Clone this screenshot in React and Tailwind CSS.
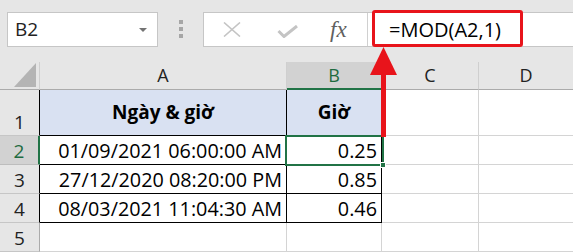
import React from "react";

const rows = [
  { n: "2", a: "01/09/2021 06:00:00 AM", b: "0.25" },
  { n: "3", a: "27/12/2020 08:20:00 PM", b: "0.85" },
  { n: "4", a: "08/03/2021 11:04:30 AM", b: "0.46" },
];

function ColHeader({ label, selected, last }) {
  return (
    <div
      className={`flex items-center justify-center text-[18px] border-b ${
        last ? "" : "border-r"
      } ${
        selected
          ? "bg-[#d2d2d2] text-[#1e6b40] border-b-2 border-b-[#217346] border-r-[#bdbdbd]"
          : "bg-[#e6e6e6] text-[#222] border-b-[#ababab] border-r-[#cfcfcf]"
      }`}
    >
      {label}
    </div>
  );
}

export default function App() {
  return (
    <div className="relative w-[573px] h-[252px] overflow-hidden bg-white font-['Open_Sans',sans-serif] text-black">
      {/* formula bar */}
      <div className="h-[62px] bg-[#e6e6e6] pt-[12px] flex items-start">
        <div className="ml-[7px] w-[151px] h-[35px] bg-white border border-[#c6c6c6] flex items-center justify-between pl-[7px] pr-[10px]">
          <span className="text-[19px] text-[#222] leading-none">B2</span>
          <span className="w-0 h-0 border-l-[4px] border-r-[4px] border-t-[4px] border-l-transparent border-r-transparent border-t-[#737373]" />
        </div>
        <div className="w-[45px] flex flex-col items-center gap-[3px] pt-[8px]">
          <span className="w-[4px] h-[4px] bg-[#a6a6a6]" />
          <span className="w-[4px] h-[4px] bg-[#a6a6a6]" />
          <span className="w-[4px] h-[4px] bg-[#a6a6a6]" />
        </div>
        <div className="flex-1 h-[35px] bg-white border border-r-0 border-[#c6c6c6] flex">
          <div className="w-[164px] h-full border-r border-[#d0d0d0] flex items-center">
            <svg className="ml-[19px]" width="18" height="15" viewBox="0 0 18 15">
              <path d="M1 0.5 L17 14.5 M17 0.5 L1 14.5" stroke="#c4c4c4" strokeWidth="1.6" fill="none" />
            </svg>
            <svg className="ml-[36px] mt-[3px]" width="21" height="13" viewBox="0 0 21 13">
              <path d="M1.5 6 L7 11.5 L20 1" stroke="#c4c4c4" strokeWidth="3" fill="none" />
            </svg>
            <span className="ml-[32px] font-['Liberation_Serif',serif] italic text-[23px] text-[#606060] leading-none">
              fx
            </span>
          </div>
          <div className="flex-1 flex items-center pl-[21px]">
            <span className="text-[20px] leading-none">=MOD(A2,1)</span>
          </div>
        </div>
      </div>

      {/* grid */}
      <div className="grid grid-cols-[40px_247px_95px_97px_94px] grid-rows-[28px_46px_29px_29px_29px_29px]">
        <div className="bg-[#e6e6e6] border-r border-b border-r-[#cfcfcf] border-b-[#ababab] flex items-end justify-end pr-[3px] pb-[2px]">
          <svg width="22" height="24" viewBox="0 0 22 24">
            <path d="M22 0 L22 24 L0 24 Z" fill="#b4b4b4" />
          </svg>
        </div>
        <ColHeader label="A" />
        <ColHeader label="B" selected />
        <ColHeader label="C" />
        <ColHeader label="D" last />

        {/* row 1 */}
        <div className="bg-[#e6e6e6] border-r border-b border-r-black border-b-[#c6c6c6] flex items-end justify-center pb-[3px] text-[19px] text-[#222] leading-[20px]">
          1
        </div>
        <div className="bg-[#d9e1f2] border-r border-b border-black flex items-center justify-center font-bold text-[19px]">
          Ngày &amp; giờ
        </div>
        <div className="bg-[#d9e1f2] border-r border-b border-black flex items-center justify-center font-bold text-[19px]">
          Giờ
        </div>
        <div className="border-r border-b border-[#d4d4d4]" />
        <div className="border-b border-[#d4d4d4]" />

        {rows.map((r) => (
          <React.Fragment key={r.n}>
            <div
              className={`border-b flex items-end justify-center pb-[3px] text-[19px] leading-[20px] ${
                r.n === "2"
                  ? "bg-[#d2d2d2] text-[#1e6b40] border-r-2 border-r-[#217346] border-b-[#bdbdbd]"
                  : "bg-[#e6e6e6] text-[#222] border-r border-r-black border-b-[#c6c6c6]"
              }`}
            >
              {r.n}
            </div>
            <div className="border-r border-b border-black flex items-end justify-end pr-[4px] pb-[3px] text-[19.8px] leading-[20px]">
              {r.a}
            </div>
            <div className="border-r border-b border-black flex items-end justify-end pr-[4px] pb-[3px] text-[19.8px] leading-[20px]">
              {r.b}
            </div>
            <div className="border-r border-b border-[#d4d4d4]" />
            <div className="border-b border-[#d4d4d4]" />
          </React.Fragment>
        ))}

        {/* row 5 */}
        <div className="bg-[#e6e6e6] border-r border-b border-r-[#ababab] border-b-[#c6c6c6] flex items-end justify-center pb-[3px] text-[19px] text-[#222] leading-[20px]">
          5
        </div>
        <div className="border-r border-b border-[#d4d4d4]" />
        <div className="border-r border-b border-[#d4d4d4]" />
        <div className="border-r border-b border-[#d4d4d4]" />
        <div className="border-b border-[#d4d4d4]" />
      </div>

      {/* selection B2 */}
      <div className="absolute left-[285px] top-[135px] w-[99px] h-[31px] border-2 border-[#217346]" />
      <div className="absolute left-[380px] top-[162px] w-[6px] h-[6px] bg-[#217346] border border-white" />

      {/* annotation */}
      <div className="absolute left-[372px] top-[10px] w-[151px] h-[37px] border-[3px] border-[#e8141b] rounded-[3px]" />
      <svg className="absolute left-[369px] top-[46px]" width="30" height="92" viewBox="0 0 30 92">
        <path d="M14.5 1 L28 29 L1 29 Z" fill="#e8141b" />
        <rect x="12" y="28" width="5" height="63" fill="#e8141b" />
      </svg>
    </div>
  );
}
